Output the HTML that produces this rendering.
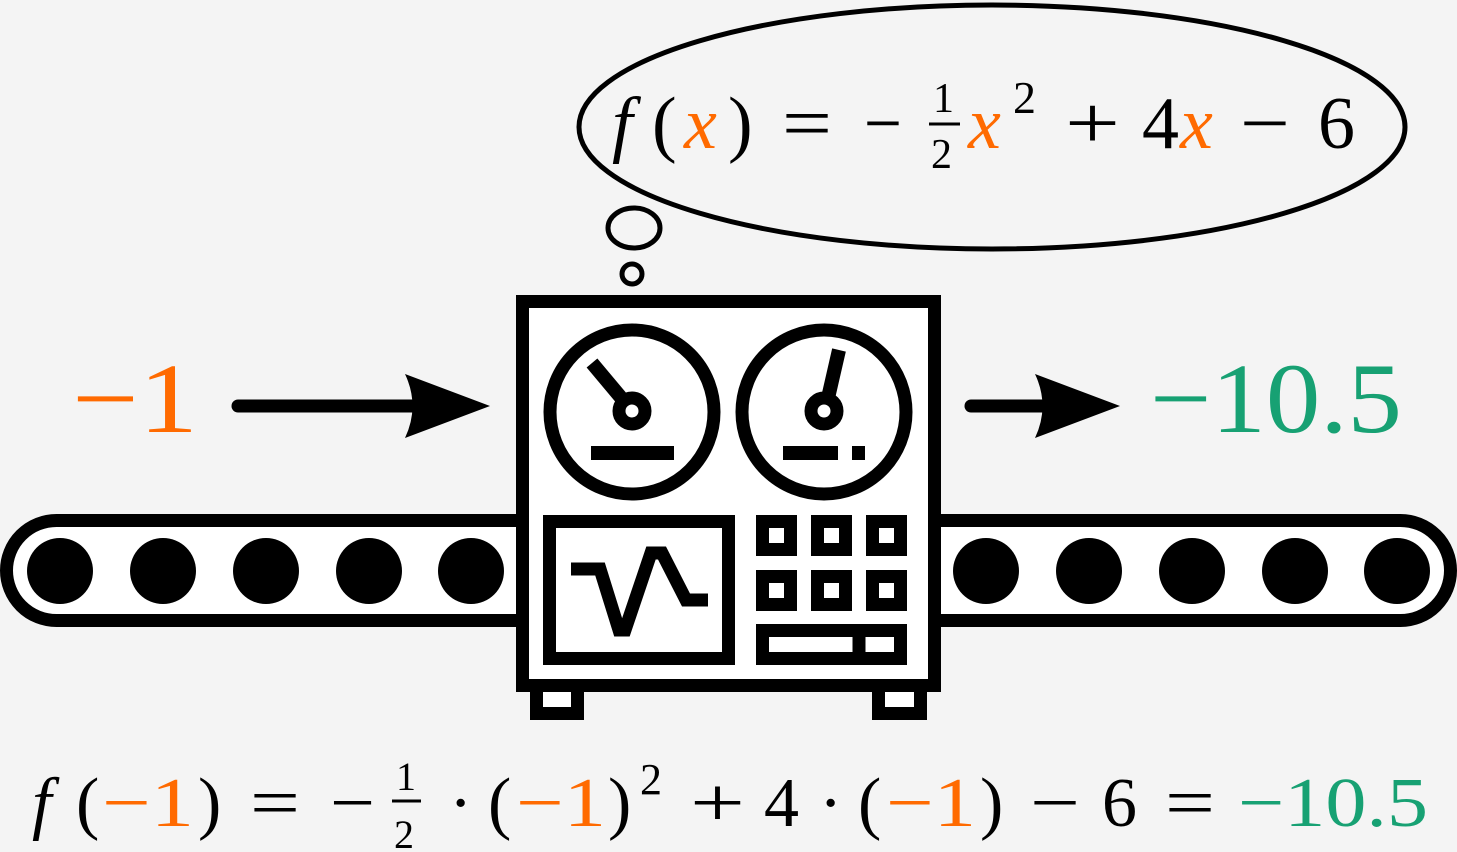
<!DOCTYPE html>
<html><head><meta charset="utf-8"><style>
html,body{margin:0;padding:0;background:#f4f4f4;}
svg{display:block}
text{font-family:"Liberation Serif","DejaVu Serif",serif;}
.i{font-style:italic}
.o{fill:#ff6a00}
.g{fill:#17a173}
</style></head><body>
<svg width="1457" height="852" viewBox="0 0 1457 852">
<rect width="1457" height="852" fill="#f4f4f4"/>
<ellipse cx="992" cy="127" rx="413" ry="122" fill="none" stroke="#000" stroke-width="5"/>
<ellipse cx="634" cy="228" rx="26" ry="20" fill="none" stroke="#000" stroke-width="5"/>
<circle cx="632" cy="274" r="10" fill="none" stroke="#000" stroke-width="5"/>
<g font-size="74">
<text x="612" y="148" class="i">f</text>
<text x="652" y="148">(</text>
<text x="684" y="148" class="i o">x</text>
<text x="728" y="148">)</text>
<text x="782" y="148" textLength="50" lengthAdjust="spacingAndGlyphs">=</text>
<text x="864" y="148" textLength="38" lengthAdjust="spacingAndGlyphs">−</text>
<text x="968" y="148" class="i o">x</text>
<text x="1065" y="148" textLength="55" lengthAdjust="spacingAndGlyphs">+</text>
<text x="1142" y="148">4</text>
<text x="1180" y="148" class="i o">x</text>
<text x="1240" y="148" textLength="50" lengthAdjust="spacingAndGlyphs">−</text>
<text x="1318" y="148">6</text>
</g>
<text x="933" y="112" font-size="42">1</text>
<line x1="929" y1="124" x2="960" y2="124" stroke="#000" stroke-width="3"/>
<text x="931" y="168" font-size="42">2</text>
<text x="1013" y="113" font-size="46">2</text>
<rect x="6.5" y="520.5" width="1444" height="100" rx="50" fill="#fff" stroke="#000" stroke-width="13"/>
<g fill="#000">
<circle cx="60" cy="571" r="33"/><circle cx="163" cy="571" r="33"/><circle cx="266" cy="571" r="33"/><circle cx="369" cy="571" r="33"/><circle cx="471" cy="571" r="33"/>
<circle cx="986" cy="571" r="33"/><circle cx="1089" cy="571" r="33"/><circle cx="1192" cy="571" r="33"/><circle cx="1295" cy="571" r="33"/><circle cx="1397" cy="571" r="33"/>
</g>
<g stroke="#000" stroke-width="13" fill="none">
<rect x="536.5" y="685" width="41" height="28.5" fill="#fff"/>
<rect x="878.5" y="685" width="42" height="28.5" fill="#fff"/>
<rect x="522.5" y="301.5" width="412" height="384" fill="#fff"/>
<circle cx="632" cy="412" r="82"/>
<circle cx="824" cy="412" r="82"/>
<circle cx="632" cy="411" r="13"/>
<circle cx="824" cy="411" r="13"/>
<line x1="592" y1="363" x2="623" y2="400" stroke-width="14"/>
<line x1="839" y1="350" x2="828" y2="398" stroke-width="14"/>
<rect x="549.5" y="521.5" width="179" height="137"/>
<polyline points="571,569 600,569 619,630 625,630 651,553 662,553 686,600 708,600" stroke-width="13" stroke-linejoin="miter"/>
<rect x="762.5" y="521.5" width="28" height="28"/><rect x="817.5" y="521.5" width="28" height="28"/><rect x="872.5" y="521.5" width="28" height="28"/>
<rect x="762.5" y="576.5" width="28" height="28"/><rect x="817.5" y="576.5" width="28" height="28"/><rect x="872.5" y="576.5" width="28" height="28"/>
<rect x="762.5" y="630.5" width="138" height="28"/>
<line x1="859" y1="630" x2="859" y2="659"/>
</g>
<g fill="#000">
<rect x="591" y="446" width="83" height="14"/>
<rect x="783" y="446" width="55" height="14"/>
<rect x="852" y="446" width="13" height="14"/>
</g>
<line x1="238" y1="406" x2="430" y2="406" stroke="#000" stroke-width="13" stroke-linecap="round"/>
<path d="M490,406 L405,374 Q420,406 405,438 Z" fill="#000"/>
<line x1="971" y1="406" x2="1060" y2="406" stroke="#000" stroke-width="13" stroke-linecap="round"/>
<path d="M1120,406 L1035,374 Q1050,406 1035,438 Z" fill="#000"/>
<text x="72" y="432" font-size="100" class="o" textLength="126" lengthAdjust="spacingAndGlyphs">−1</text>
<text x="1150" y="432" font-size="100" class="g" textLength="252" lengthAdjust="spacingAndGlyphs">−10.5</text>
<g font-size="70">
<text x="32" y="826" class="i">f</text>
<text x="76" y="826">(</text>
<text x="102" y="826" class="o" textLength="92" lengthAdjust="spacingAndGlyphs">−1</text>
<text x="198" y="826">)</text>
<text x="250" y="826" textLength="50" lengthAdjust="spacingAndGlyphs">=</text>
<text x="330" y="826" textLength="45" lengthAdjust="spacingAndGlyphs">−</text>
<text x="449" y="826">·</text>
<text x="488" y="826">(</text>
<text x="516" y="826" class="o" textLength="90" lengthAdjust="spacingAndGlyphs">−1</text>
<text x="608" y="826">)</text>
<text x="690" y="826" textLength="55" lengthAdjust="spacingAndGlyphs">+</text>
<text x="764" y="826">4</text>
<text x="819" y="826">·</text>
<text x="858" y="826">(</text>
<text x="886" y="826" class="o" textLength="90" lengthAdjust="spacingAndGlyphs">−1</text>
<text x="980" y="826">)</text>
<text x="1030" y="826" textLength="50" lengthAdjust="spacingAndGlyphs">−</text>
<text x="1102" y="826">6</text>
<text x="1165" y="826" textLength="50" lengthAdjust="spacingAndGlyphs">=</text>
<text x="1238" y="826" class="g" textLength="190" lengthAdjust="spacingAndGlyphs">−10.5</text>
</g>
<text x="396" y="790" font-size="40">1</text>
<line x1="392" y1="801" x2="421" y2="801" stroke="#000" stroke-width="3"/>
<text x="394" y="848" font-size="40">2</text>
<text x="640" y="794" font-size="44">2</text>
</svg>
</body></html>
